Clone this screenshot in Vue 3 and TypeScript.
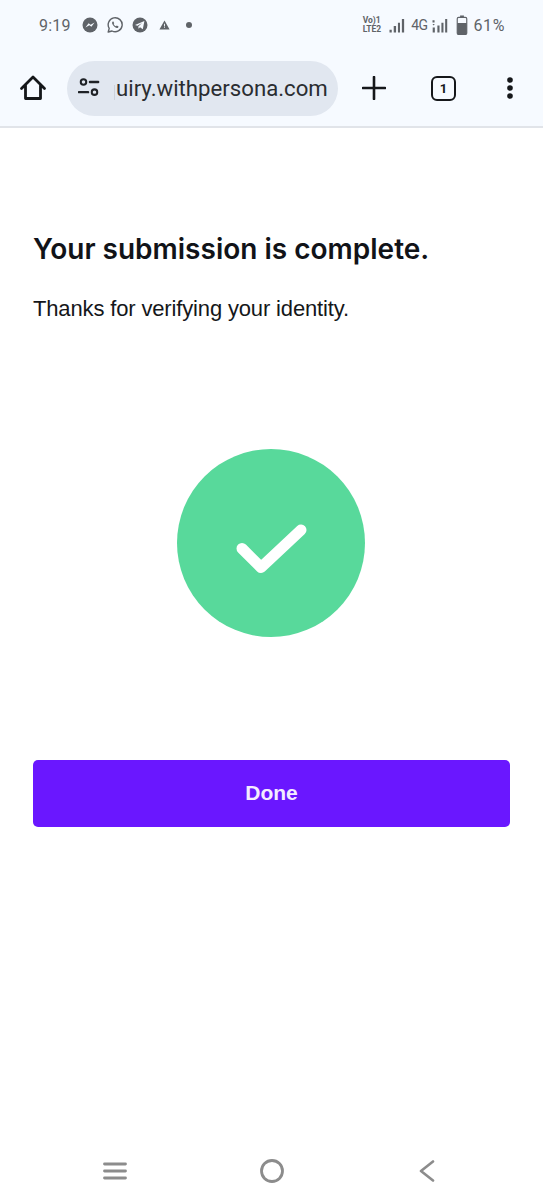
<template>
  <div class="screen">
    <header class="chrome">
      <div class="status">
        <div class="status-left">
          <span class="time">9:19</span>
          <svg class="ic-app" viewBox="0 0 16 16"><circle cx="8" cy="8" r="7.5" fill="#5f6368" /><path d="M3.4 10.400 6.600 6.200l2 1.500 4-2.100-3.200 4.200-2-1.500z" fill="#f6faff" /></svg>
          <svg class="ic-app" viewBox="0 0 16 16"><path d="M1.2 15l1-3.600A7 7 0 1 1 5 14z" fill="none" stroke="#5f6368" stroke-width="1.400" stroke-linejoin="round" /><path d="M5.700 4.600c-1 .8-.8 2.300.6 4s3 2.700 4.200 2.300c.8-.3 1.100-1 1-1.500l-1.700-.9-.8.8c-.9-.3-1.900-1.200-2.400-2.300l.6-.8-.8-1.700z" fill="#5f6368" /></svg>
          <svg class="ic-app" viewBox="0 0 16 16"><circle cx="8" cy="8" r="7.500" fill="#5f6368" /><path d="M3 8 12.400 4 10.800 12.300 8 10.300 6.600 11.800 6.300 9.400 10 6 5.500 8.800z" fill="#f6faff" /></svg>
          <svg class="ic-warn" viewBox="0 0 12 11"><path d="M6 .6 11.600 10.400H.4z" fill="#5f6368" /><path d="M5.500 4h1v3.200h-1zM5.500 7.900h1v1h-1z" fill="#f6faff" /></svg>
          <span class="dot"></span>
        </div>
        <div class="status-right">
          <span class="volte"><span>Vo)1</span><span>LTE2</span></span>
          <svg class="ic-signal" viewBox="0 0 16 16"><path d="M0 12.500h2.400v3H0zM4.500 8.500H7v7H4.500zM9 5h2.200v10.500H9zM13.200 1H15.600v14.500h-2.400z" fill="#5f6368" /></svg>
          <span class="net">4G</span>
          <svg class="ic-signal" viewBox="0 0 16 16"><path d="M0 2.500h2.200v2.200H0zM0 6.500h2.400l-1.200 1.600zM.2 10h2.300v5.500H.2zM5.200 8h2.300v7.500H5.200zM9.500 5h2.200v10.500H9.500zM13.500 1h2.200v14.500h-2.200z" fill="#5f6368" /></svg>
          <svg class="ic-batt" viewBox="0 0 12 21"><path d="M4 .5h4v2H4z" fill="#5f6368" /><rect x="1" y="2.500" width="10" height="18" rx="1.500" fill="none" stroke="#5f6368" stroke-width="1.200" /><path d="M1 8.500h10v10.500a1.500 1.500 0 0 1-1.500 1.500h-7A1.500 1.500 0 0 1 1 19z" fill="#5f6368" /></svg>
          <span class="pct">61%</span>
        </div>
      </div>
      <div class="toolbar">
        <svg class="ic-home" viewBox="0 0 28 28"><path d="M2.500 14.500 14 3l11.500 11.500M6.500 11v13.500h15V11" fill="none" stroke="#15171a" stroke-width="2.800" stroke-linejoin="round" stroke-linecap="round" /></svg>
        <div class="pill">
          <svg class="ic-tune" viewBox="0 0 24 24"><circle cx="6" cy="5.500" r="3" fill="none" stroke="#1f2226" stroke-width="2.200" /><path d="M13 5.500h9M1 16.500h10" stroke="#1f2226" stroke-width="2.600" stroke-linecap="round" /><circle cx="18" cy="16.500" r="3" fill="none" stroke="#1f2226" stroke-width="2.200" /></svg>
          <span class="url">uiry.withpersona.com</span>
        </div>
        <svg class="ic-plus" viewBox="0 0 24 24"><path d="M12 1v22M1 12h22" stroke="#15171a" stroke-width="2.600" stroke-linecap="round" /></svg>
        <span class="tabs">1</span>
        <svg class="ic-more" viewBox="0 0 8 24"><circle cx="4" cy="4" r="2.800" fill="#15171a" /><circle cx="4" cy="12" r="2.800" fill="#15171a" /><circle cx="4" cy="20" r="2.800" fill="#15171a" /></svg>
      </div>
    </header>

    <main class="content">
      <h1 class="title">Your submission is complete.</h1>
      <p class="sub">Thanks for verifying your identity.</p>
      <div class="success">
        <svg viewBox="0 0 188 188" width="188" height="188">
          <circle cx="94" cy="94" r="94" fill="#58d99b" />
          <path d="M65 99.500 84 118.500 124 81" fill="none" stroke="#fff" stroke-width="11" stroke-linecap="round" stroke-linejoin="round" />
        </svg>
      </div>
      <button class="done">Done</button>
    </main>

    <nav class="nav">
      <svg class="nav-menu" viewBox="0 0 24 18"><path d="M1.500 2h21M1.500 9h21M1.500 16h21" stroke="#8c8c8c" stroke-width="2.800" stroke-linecap="round" /></svg>
      <svg class="nav-home" viewBox="0 0 24 24"><circle cx="12" cy="12" r="10.500" fill="none" stroke="#8c8c8c" stroke-width="2.800" /></svg>
      <svg class="nav-back" viewBox="0 0 16 22"><path d="M14 1.500 2 11l12 9.500" fill="none" stroke="#8c8c8c" stroke-width="2.600" stroke-linecap="round" stroke-linejoin="round" /></svg>
    </nav>
  </div>
</template>

<script setup lang="ts">
</script>

<style>
html, body { background: #fff; }
</style>

<style scoped>
.screen {
  width: 543px;
  height: 1200px;
  display: flex;
  flex-direction: column;
  overflow: hidden;
  background: #fff;
  font-family: "Liberation Sans", Arial, sans-serif;
}
.chrome {
  height: 128px;
  box-sizing: border-box;
  background: #f6faff;
  border-bottom: 2px solid #e1e4e9;
  flex: none;
}
.status {
  height: 50px;
  padding: 0 38px 0 39px;
  display: flex;
  align-items: center;
  justify-content: space-between;
  color: #5f6368;
  font-family: Roboto, sans-serif;
}
.status-left, .status-right { display: flex; align-items: center; }
.time { font-size: 16px; letter-spacing: 0.2px; margin-right: 11px; }
.ic-app { width: 16px; height: 16px; margin-right: 9px; }
.ic-warn { width: 11px; height: 10px; margin: 0 16px 0 2px; }
.dot { width: 6px; height: 6px; border-radius: 50%; background: #5f6368; }
.volte {
  display: flex;
  flex-direction: column;
  font-size: 8.500px;
  line-height: 9px;
  font-weight: 700;
  margin-right: 8px;
}
.ic-signal { width: 16px; height: 15px; }
.net { font-size: 14px; letter-spacing: -0.6px; margin: 0 5px 0 6px; }
.ic-batt { width: 12px; height: 20px; margin: 0 5px 0 8px; }
.pct { font-size: 16px; letter-spacing: 0.600px; }
.toolbar {
  height: 77px;
  display: flex;
  align-items: center;
  padding-bottom: 1px;
  box-sizing: border-box;
  color: #15171a;
}
.ic-home { width: 28px; height: 28px; margin-left: 19px; margin-right: 20px; flex: none; }
.pill {
  width: 271px;
  height: 55px;
  border-radius: 28px;
  background: #e1e7f0;
  display: flex;
  align-items: center;
  box-sizing: border-box;
  padding-left: 11px;
  flex: none;
}
.ic-tune { width: 22px; height: 22px; margin-right: 14px; }
.url {
  font-family: Roboto, sans-serif;
  font-size: 22.200px;
  color: #2a2d31;
  white-space: nowrap;
}
.url::before {
  content: "";
  display: inline-block;
  width: 1px;
  height: 15px;
  margin-right: 1px;
  background: #cdd2da;
  vertical-align: -4px;
}
.ic-plus { width: 24px; height: 24px; margin-left: 24px; }
.tabs {
  width: 25px;
  height: 25px;
  box-sizing: border-box;
  border: 2.500px solid #15171a;
  border-radius: 6px;
  margin-left: 45px;
  display: flex;
  align-items: center;
  justify-content: center;
  font-family: Roboto, sans-serif;
  font-size: 13px;
  font-weight: 700;
}
.ic-more { width: 8px; height: 24px; margin-left: 50px; }
.content {
  padding: 0 33px;
  display: flex;
  flex-direction: column;
}
.title {
  margin: 102px 0 0;
  font-family: Inter, "Liberation Sans", sans-serif;
  font-size: 28px;
  line-height: 38px;
  font-weight: 600;
  color: #111318;
  white-space: nowrap;
}
.sub {
  margin: 27px 0 0;
  font-size: 22px;
  line-height: 28px;
  letter-spacing: -0.150px;
  color: #15171a;
  white-space: nowrap;
}
.success {
  margin-top: 126px;
  padding-right: 1px;
  display: flex;
  justify-content: center;
}
.success svg { display: block; }
.done {
  margin-top: 123px;
  height: 67px;
  padding-bottom: 3px;
  border: none;
  border-radius: 5px;
  background: #6a17ff;
  color: #f4ecff;
  font-family: "Liberation Sans", Arial, sans-serif;
  font-size: 21px;
  font-weight: 700;
}
.nav {
  margin-top: auto;
  height: 58px;
  display: flex;
  align-items: center;
  padding-left: 103px;
  padding-bottom: 1px;
  box-sizing: border-box;
}
.nav-menu { width: 24px; height: 18px; }
.nav-home { width: 24px; height: 24px; margin-left: 132.500px; }
.nav-back { width: 16px; height: 22px; margin-left: 135px; }
</style>
